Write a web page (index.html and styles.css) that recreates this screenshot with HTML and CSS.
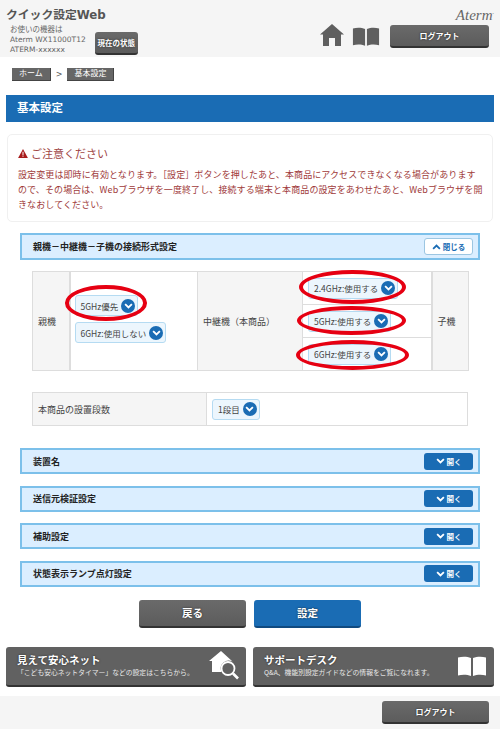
FILE: index.html
```html
<!DOCTYPE html>
<html lang="ja">
<head>
  <meta charset="UTF-8" />
  <meta name="viewport" content="width=device-width, initial-scale=1.0"/>
  <title>クイック設定Web</title>
  <link rel="stylesheet" href="styles.css">
</head>
<body>
  <svg class="defs" width="0" height="0">
    <symbol id="down" viewBox="0 0 12 8"><path d="M1.5 1.5 6 6l4.5-4.5" fill="none" stroke="currentColor" stroke-width="2.4"/></symbol>
    <symbol id="up" viewBox="0 0 12 8"><path d="M1.5 6.5 6 2l4.5 4.5" fill="none" stroke="currentColor" stroke-width="2.4"/></symbol>
    <symbol id="book" viewBox="0 0 30 20"><path d="M1 1.500C5 .3 10 .3 14 2v18C10 18.300 5 18.300 1 19.500zM29 1.500C25 .3 20 .3 16 2v18c4-1.700 9-1.700 13-.5z" fill="currentColor"/></symbol>
  </svg>

  <header class="top">
    <div class="top-left">
      <h1>クイック設定Web</h1>
      <div class="device">
        <p>お使いの機器は<br>Aterm WX11000T12<br>ATERM-xxxxxx</p>
        <a class="btn status-btn" href="#">現在の状態</a>
      </div>
    </div>
    <div class="top-right">
      <span class="logo">Aterm<sup>.</sup></span>
      <div class="top-tools">
        <svg class="home-icon" viewBox="0 0 24 22"><path d="M12 0 0 10.500h3V22h6v-8h6v8h6V10.500h3z" fill="#5f5f5f"/></svg>
        <svg class="book-icon"><use href="#book"/></svg>
        <a class="btn logout-btn" href="#">ログアウト</a>
      </div>
    </div>
  </header>

  <main class="content">
    <nav class="crumbs">
      <a href="#">ホーム</a>
      <span>&gt;</span>
      <a href="#">基本設定</a>
    </nav>

    <h2 class="page-title">基本設定</h2>

    <section class="notice">
      <h3><svg viewBox="0 0 12 11"><path d="M6 0 12 11H0z" fill="#a81c1c"/><path d="M5.400 3.500h1.200v4H5.400zM5.400 8.300h1.200v1.300H5.400z" fill="#fff"/></svg>ご注意ください</h3>
      <p>設定変更は即時に有効となります。［設定］ボタンを押したあと、本商品にアクセスできなくなる場合があります<br>ので、その場合は、Webブラウザを一度終了し、接続する端末と本商品の設定をあわせたあと、Webブラウザを開<br>きなおしてください。</p>
    </section>

    <div class="wrap">
      <div class="section-head open">
        <span>親機－中継機－子機の接続形式設定</span>
        <a class="toggle close-btn" href="#"><svg><use href="#up"/></svg>閉じる</a>
      </div>

      <table class="conn-table">
        <tr>
          <th rowspan="3" class="col-parent">親機</th>
          <td rowspan="3" class="col-parent-val">
            <div class="sel mark mark-a">5GHz優先<i><svg><use href="#down"/></svg></i></div>
            <div class="sel">6GHz:使用しない<i><svg><use href="#down"/></svg></i></div>
          </td>
          <th rowspan="3" class="col-relay">中継機（本商品）</th>
          <td class="col-relay-val"><div class="sel mark mark-b">2.4GHz:使用する<i><svg><use href="#down"/></svg></i></div></td>
          <th rowspan="3" class="col-child">子機</th>
        </tr>
        <tr>
          <td class="col-relay-val"><div class="sel mark mark-c">5GHz:使用する<i><svg><use href="#down"/></svg></i></div></td>
        </tr>
        <tr>
          <td class="col-relay-val"><div class="sel mark mark-d">6GHz:使用する<i><svg><use href="#down"/></svg></i></div></td>
        </tr>
      </table>

      <table class="stage-table">
        <tr>
          <th>本商品の設置段数</th>
          <td><div class="sel">1段目<i><svg><use href="#down"/></svg></i></div></td>
        </tr>
      </table>

      <div class="section-list">
        <div class="section-head">
          <span>装置名</span>
          <a class="toggle open-btn" href="#"><svg><use href="#down"/></svg>開く</a>
        </div>
        <div class="section-head">
          <span>送信元検証設定</span>
          <a class="toggle open-btn" href="#"><svg><use href="#down"/></svg>開く</a>
        </div>
        <div class="section-head">
          <span>補助設定</span>
          <a class="toggle open-btn" href="#"><svg><use href="#down"/></svg>開く</a>
        </div>
        <div class="section-head">
          <span>状態表示ランプ点灯設定</span>
          <a class="toggle open-btn" href="#"><svg><use href="#down"/></svg>開く</a>
        </div>
      </div>
    </div>

    <div class="actions">
      <a class="btn action-btn" href="#">戻る</a>
      <a class="btn action-btn blue" href="#">設定</a>
    </div>

    <div class="links">
      <a class="link-card" href="#">
        <div>
          <strong>見えて安心ネット</strong>
          <small>「こども安心ネットタイマー」などの設定はこちらから。</small>
        </div>
        <svg class="net-icon" viewBox="0 0 30 30">
          <path d="M12 0 0 10h3v11h9.500a8 8 0 0 1 11-10.500L12 0z" fill="#fff"/>
          <circle cx="19" cy="17.500" r="6.500" fill="none" stroke="#fff" stroke-width="1.800"/>
          <path d="m24 22.500 5 5" stroke="#fff" stroke-width="2.600"/>
        </svg>
      </a>
      <a class="link-card" href="#">
        <div>
          <strong>サポートデスク</strong>
          <small>Q&amp;A、機能別設定ガイドなどの情報をご覧になれます。</small>
        </div>
        <svg class="desk-icon"><use href="#book"/></svg>
      </a>
    </div>
  </main>

  <footer class="bottom">
    <a class="btn foot-btn" href="#">ログアウト</a>
  </footer>
</body>
</html>
```

FILE: styles.css
```css
* {
  box-sizing: border-box;
}

body {
  margin: 0;
  width: 500px;
  height: 729px;
  overflow: hidden;
  background: #ffffff;
  color: #444;
  font-family: "DejaVu Sans", "Noto Sans CJK JP", sans-serif;
  font-size: 8.500px;
}

a {
  text-decoration: none;
}

.defs {
  display: block;
  height: 0;
}

/* header */
.top {
  display: flex;
  justify-content: space-between;
  height: 57px;
  padding: 5px 6px 5px 6px;
  background: #f5f5f5;
}

.top h1 {
  margin: 0;
  height: 20px;
  font-size: 11.800px;
  line-height: 20px;
  color: #555;
  font-weight: bold;
}

.device {
  display: flex;
  align-items: flex-end;
  gap: 9px;
  padding-left: 4px;
}

.device p {
  margin: 0;
  font-size: 7.500px;
  line-height: 10px;
  color: #666;
}

.btn {
  display: flex;
  align-items: center;
  justify-content: center;
  color: #fff;
  font-weight: bold;
  background: linear-gradient(#6a6a6a, #5c5c5c);
  border-bottom: 2px solid #333;
  border-radius: 3px;
  text-shadow: 0 0 2px #222;
}

.status-btn {
  width: 43px;
  height: 23px;
  font-size: 7.500px;
  font-family: "Noto Sans CJK JP", sans-serif;
}

.top-right {
  display: flex;
  flex-direction: column;
  align-items: flex-end;
}

.logo {
  height: 19px;
  font-family: "Liberation Serif", serif;
  font-style: italic;
  font-size: 15px;
  line-height: 14px;
  color: #666;
}

.logo sup {
  font-size: 6px;
}

.top-tools {
  display: flex;
  align-items: flex-end;
  padding-right: 5px;
}

.home-icon {
  width: 24px;
  height: 22px;
  margin-bottom: 2px;
}

.book-icon {
  width: 28px;
  height: 19px;
  margin: 0 10px 2px 8px;
  color: #5f5f5f;
}

.logout-btn {
  width: 99px;
  height: 23px;
  font-size: 8px;
}

/* main column */
.content {
  padding: 0 6px;
}

.crumbs {
  display: flex;
  align-items: center;
  gap: 5px;
  height: 13px;
  margin-top: 11px;
  padding-left: 6px;
  color: #555;
  font-size: 8px;
}

.crumbs a {
  display: block;
  height: 13px;
  padding: 0 7px;
  background: #666;
  border-bottom: 1px solid #444;
  border-right: 1px solid #444;
  color: #fff;
  font-size: 8px;
  line-height: 12px;
}

.page-title {
  height: 27px;
  margin: 14px 0 0;
  padding-left: 11px;
  background: #1a6cb4;
  color: #fff;
  font-size: 11.500px;
  font-weight: bold;
  line-height: 26px;
}

.notice {
  height: 88px;
  margin: 12px 1px 0;
  padding: 10px 4px 10px 10px;
  border: 1px solid #f0f0f0;
  border-radius: 5px;
  color: #a03a3a;
}

.notice h3 {
  display: flex;
  align-items: center;
  gap: 3px;
  height: 16px;
  margin: 0;
  font-size: 11px;
  font-weight: normal;
  color: #a04545;
}

.notice h3 svg {
  width: 10px;
  height: 9px;
}

.notice p {
  margin: 6px 0 0;
  font-size: 9px;
  letter-spacing: 0.1px;
  line-height: 15px;
  font-family: "Noto Sans CJK JP", sans-serif;
}

.wrap {
  padding: 11px 14px 0;
}

.section-head {
  display: flex;
  align-items: center;
  justify-content: space-between;
  height: 26px;
  padding: 0 5px 0 11px;
  background: #dbeeff;
  border: 2px solid #7cc0ea;
  color: #222;
  font-size: 9px;
  font-weight: bold;
}

.section-head.open {
  height: 27px;
}

.section-head span {
  font-family: "Noto Sans CJK JP", sans-serif;
}

.section-list .section-head {
  margin-top: 11.600px;
}

.section-list .section-head:first-child {
  margin-top: 22px;
}

.toggle {
  display: flex;
  align-items: center;
  justify-content: center;
  gap: 2px;
  width: 49px;
  height: 17px;
  border-radius: 3px;
  font-size: 7.500px;
  font-weight: bold;
}

.toggle svg {
  width: 9px;
  height: 6px;
}

.open-btn {
  background: #1a6cb4;
  color: #fff;
}

.close-btn {
  background: #fff;
  border: 1px solid #9cc6e2;
  color: #1a6cb4;
}

/* tables */
table {
  width: 436px;
  margin-left: 12px;
  border-collapse: collapse;
  table-layout: fixed;
  font-family: "Noto Sans CJK JP", sans-serif;
}

th, td {
  padding: 0;
  border: 1px solid #dddddd;
  font-size: 9px;
  font-weight: normal;
  color: #444;
  text-align: left;
}

th {
  padding-left: 5px;
  background: #f5f5f5;
}

.conn-table {
  height: 100px;
  margin-top: 11px;
}

.col-parent { width: 37px; border-right-width: 2px; }
.col-parent-val { width: 128px; padding: 0 0 4px 4px; }
.col-relay { width: 105px; }
.col-relay-val { width: 129px; height: 33px; padding-left: 5px; }
.col-child { width: 37px; border-left-width: 2px; }

.stage-table {
  height: 34px;
  margin-top: 21px;
}

.stage-table th {
  width: 174px;
}

.stage-table td {
  padding-left: 5px;
}

.sel {
  display: flex;
  width: fit-content;
  align-items: center;
  gap: 3px;
  height: 21px;
  padding: 0 2px 0 5px;
  background: #ecf6fd;
  border: 1px solid #b5dbf2;
  border-radius: 3px;
  font-size: 8.500px;
  color: #444;
}

.sel + .sel {
  margin-top: 6px;
}

.sel i {
  display: flex;
  align-items: center;
  justify-content: center;
  width: 14px;
  height: 14px;
  border-radius: 50%;
  background: #1a6cb4;
  color: #fff;
}

.sel i svg {
  width: 9px;
  height: 6px;
}

/* red rings drawn over the selects */
.mark {
  position: relative;
}

.mark::after {
  content: "";
  position: absolute;
  border: 4px solid #e60012;
  border-radius: 50%;
}

.mark-a::after { left: -11px; right: -10px; top: -11px; bottom: -6px; }
.mark-b::after { left: -10px; right: -9px; top: -9px; bottom: -6px; }
.mark-c::after { left: -12px; right: -16px; top: -6px; bottom: -4px; }
.mark-d::after { left: -13px; right: -19px; top: -5px; bottom: -6px; }

/* bottom buttons */
.actions {
  display: flex;
  justify-content: center;
  gap: 8px;
  margin-top: 13px;
}

.action-btn {
  width: 107px;
  height: 28px;
  font-size: 10.500px;
}

.action-btn.blue {
  background: #1a6cb4;
  border-bottom-color: #104a80;
}

.links {
  display: flex;
  justify-content: space-between;
  margin-top: 19px;
}

.link-card {
  display: flex;
  align-items: center;
  justify-content: space-between;
  width: 240px;
  height: 40px;
  padding: 0 7px 0 11px;
  background: #616161;
  border-bottom: 2px solid #333;
  border-radius: 3px;
  color: #fff;
}

.link-card:last-child {
  width: 241px;
}

.link-card strong {
  display: block;
  font-size: 10.500px;
  line-height: 14px;
  text-shadow: 0 0 2px #222;
}

.link-card small {
  display: block;
  font-size: 6.800px;
  line-height: 11px;
  color: #e8e8e8;
  font-family: "Noto Sans CJK JP", sans-serif;
}

.net-icon {
  width: 30px;
  height: 30px;
}

.desk-icon {
  width: 30px;
  height: 22px;
  color: #fff;
}

.bottom {
  display: flex;
  justify-content: flex-end;
  height: 33px;
  margin-top: 9px;
  padding: 5px 11px 0 0;
  background: #f5f5f5;
}

.foot-btn {
  width: 107px;
  height: 23px;
  font-size: 8px;
}
```
